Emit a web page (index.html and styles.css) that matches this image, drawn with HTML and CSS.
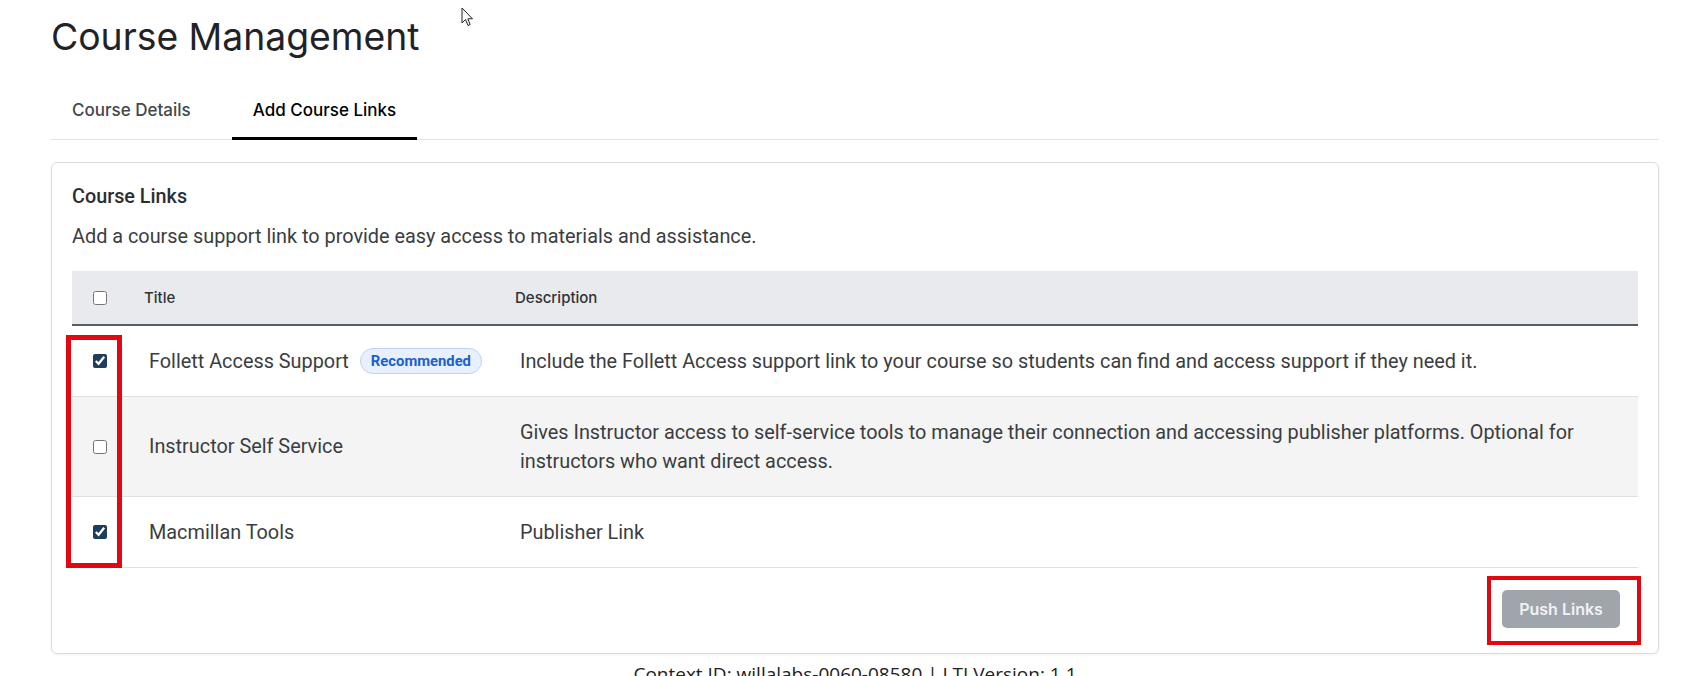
FILE: index.html
```html
<!DOCTYPE html>
<html lang="en">
<head>
    <meta charset="UTF-8">
    <title>Course Management</title>
    <link rel="stylesheet" href="styles.css">
</head>
<body>
    <div class="page">
        <h1 class="page-title">Course Management</h1>

        <!-- Tabs -->
        <nav class="tabs">
            <a class="tab">Course Details</a>
            <a class="tab active">Add Course Links</a>
        </nav>

        <!-- Course Links card -->
        <section class="card">
            <h2 class="card-title">Course Links</h2>
            <p class="card-text">Add a course support link to provide easy access to materials and assistance.</p>

            <table class="links-table">
                <colgroup>
                    <col class="col-check">
                    <col class="col-title">
                    <col>
                </colgroup>
                <thead>
                    <tr>
                        <th class="cell-check"><input type="checkbox"></th>
                        <th>Title</th>
                        <th>Description</th>
                    </tr>
                </thead>
                <tbody>
                    <tr>
                        <td class="cell-check"><input type="checkbox" checked></td>
                        <td>
                            <div class="title-wrap">
                                <span>Follett Access Support</span>
                                <span class="badge">Recommended</span>
                            </div>
                        </td>
                        <td>Include the Follett Access support link to your course so students can find and access support if they need it.</td>
                    </tr>
                    <tr class="alt">
                        <td class="cell-check"><input type="checkbox"></td>
                        <td>Instructor Self Service</td>
                        <td>Gives Instructor access to self-service tools to manage their connection and accessing publisher platforms. Optional for instructors who want direct access.</td>
                    </tr>
                    <tr>
                        <td class="cell-check"><input type="checkbox" checked></td>
                        <td>Macmillan Tools</td>
                        <td>Publisher Link</td>
                    </tr>
                </tbody>
            </table>

            <div class="actions">
                <button type="button" class="btn-push" disabled>Push Links</button>
            </div>
        </section>

        <footer class="context-info">Context ID: willalabs-0060-08580 | LTI Version: 1.1</footer>
    </div>

    <!-- annotation marks from the screenshot -->
    <div class="mark mark-checks"></div>
    <div class="mark mark-push"></div>

    <svg class="cursor" width="13" height="20" viewBox="0 0 13 20">
        <path d="M1 1 L1 16 L4.5 12.5 L7 18.5 L9.2 17.6 L6.8 11.8 L11.5 11.8 Z" fill="#fff" stroke="#222" stroke-width="1"/>
    </svg>
</body>
</html>
```

FILE: styles.css
```css
/* General Page Styling */
body {
    margin: 0;
    font-family: 'Roboto', sans-serif;
    color: #333;
    background-color: #fff;
    position: relative;
}

.page {
    margin: 0 27px 0 51px;
}

.page-title {
    font-family: 'Inter', sans-serif;
    font-size: 37.3px;
    font-weight: 400;
    line-height: normal;
    color: #1f2328;
    margin: 14px 0 0 0;
}

/* Tabs */
.tabs {
    display: flex;
    gap: 20px;
    margin-top: 27px;
    border-bottom: 1px solid #e2e3e5;
}

.tab {
    font-family: 'Inter', sans-serif;
    font-size: 17px;
    font-weight: 500;
    line-height: 24px;
    color: #43474d;
    padding: 12px 21px 15px;
    border-bottom: 3px solid transparent;
    margin-bottom: -1px;
    cursor: pointer;
}

.tab.active {
    color: #000;
    border-bottom-color: #000;
}

/* Card */
.card {
    margin-top: 22px;
    border: 1px solid #dadbdd;
    border-radius: 6px;
    box-shadow: 0 1px 3px rgba(0, 0, 0, 0.06);
    padding: 20px 20px 25px;
}

.card-title {
    font-size: 19.8px;
    font-weight: 500;
    line-height: 28px;
    color: #2b2f33;
    margin: 0;
}

.card-text {
    font-size: 19.85px;
    line-height: 28px;
    color: #3a3d41;
    margin: 12px 0 20px;
}

/* Table */
.links-table {
    width: 100%;
    border-collapse: collapse;
    table-layout: fixed;
}

.col-check {
    width: 60px;
}

.col-title {
    width: 371px;
}

.links-table th {
    font-family: 'Inter', sans-serif;
    font-size: 15px;
    font-weight: 500;
    color: #2f3337;
    text-align: left;
    height: 53px;
    padding: 0 12px;
    background-color: #e9eaee;
    border-bottom: 2px solid #575c63;
}

.links-table td {
    font-size: 19.85px;
    line-height: 29px;
    color: #3a3d41;
    padding: 20.5px 18px 20.5px 17px;
    border-bottom: 1px solid #dfe0e3;
    vertical-align: middle;
}

.links-table tr.alt td {
    background-color: #f4f4f5;
}

.links-table .cell-check {
    padding-left: 21px;
    padding-right: 0;
}

.links-table input[type="checkbox"] {
    width: 14px;
    height: 14px;
    margin: 0;
    display: block;
    accent-color: #1f3d5c;
}

.title-wrap {
    display: flex;
    align-items: center;
    gap: 11px;
}

.badge {
    font-size: 14.8px;
    font-weight: 700;
    line-height: 24px;
    color: #1b5fd1;
    background-color: #e8f0fd;
    border: 1px solid #bdd3f4;
    border-radius: 13px;
    padding: 0 10px;
}

/* Actions */
.actions {
    display: flex;
    justify-content: flex-end;
    margin-top: 22px;
    padding-right: 18px;
}

.btn-push {
    font-family: 'Inter', sans-serif;
    font-size: 16px;
    font-weight: 600;
    color: #f1f2f4;
    background-color: #a0a4ab;
    border: none;
    border-radius: 5px;
    width: 118px;
    height: 38px;
}

/* Footer */
.context-info {
    font-family: 'Open Sans', sans-serif;
    font-size: 19px;
    color: #222;
    text-align: center;
    margin-top: 7px;
}

/* Annotation marks */
.mark {
    position: absolute;
    border: 5px solid #e3080f;
    box-sizing: border-box;
}

.mark-checks {
    left: 66px;
    top: 335px;
    width: 56px;
    height: 233px;
}

.mark-push {
    left: 1487px;
    top: 576px;
    width: 154px;
    height: 69px;
    border-width: 4.5px;
}

.cursor {
    position: absolute;
    left: 461px;
    top: 7px;
}
```
